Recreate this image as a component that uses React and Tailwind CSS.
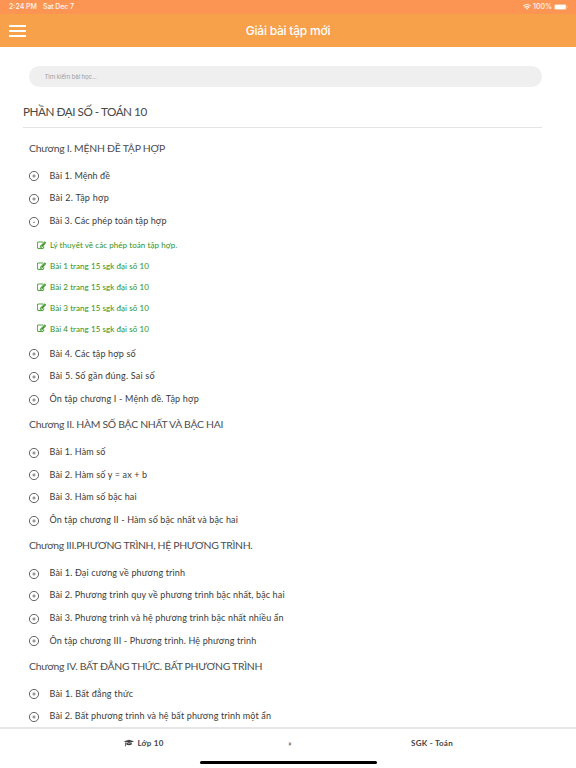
import React, { useState } from 'react';

const chapters = [
  {
    name: 'Chương I. MỆNH ĐỀ TẬP HỢP',
    tracking: 'tracking-[-0.24px]',
    lessons: [
      { name: 'Bài 1. Mệnh đề', tracking: 'tracking-[0.08px]' },
      { name: 'Bài 2. Tập hợp', tracking: 'tracking-[0.26px]' },
      {
        name: 'Bài 3. Các phép toán tập hợp',
        tracking: 'tracking-[0.1px]',
        items: [
          'Lý thuyết về các phép toán tập hợp.',
          'Bài 1 trang 15 sgk đại số 10',
          'Bài 2 trang 15 sgk đại số 10',
          'Bài 3 trang 15 sgk đại số 10',
          'Bài 4 trang 15 sgk đại số 10',
        ],
      },
      { name: 'Bài 4. Các tập hợp số' },
      { name: 'Bài 5. Số gần đúng. Sai số', tracking: 'tracking-[0.2px]' },
      { name: 'Ôn tập chương I - Mệnh đề. Tập hợp', tracking: 'tracking-[0.17px]' },
    ],
  },
  {
    name: 'Chương II. HÀM SỐ BẬC NHẤT VÀ BẬC HAI',
    tracking: 'tracking-[-0.28px]',
    lessons: [
      { name: 'Bài 1. Hàm số' },
      { name: 'Bài 2. Hàm số y = ax + b' },
      { name: 'Bài 3. Hàm số bậc hai' },
      { name: 'Ôn tập chương II - Hàm số bậc nhất và bậc hai' },
    ],
  },
  {
    name: 'Chương III.PHƯƠNG TRÌNH, HỆ PHƯƠNG TRÌNH.',
    tracking: 'tracking-[-0.32px]',
    lessons: [
      { name: 'Bài 1. Đại cương về phương trình', tracking: 'tracking-[0.15px]' },
      { name: 'Bài 2. Phương trình quy về phương trình bậc nhất, bậc hai' },
      { name: 'Bài 3. Phương trình và hệ phương trình bậc nhất nhiều ẩn' },
      { name: 'Ôn tập chương III - Phương trình. Hệ phương trình' },
    ],
  },
  {
    name: 'Chương IV. BẤT ĐẲNG THỨC. BẤT PHƯƠNG TRÌNH',
    tracking: 'tracking-[-0.28px]',
    lessons: [
      { name: 'Bài 1. Bất đẳng thức', tracking: 'tracking-[0.2px]' },
      { name: 'Bài 2. Bất phương trình và hệ bất phương trình một ẩn' },
    ],
  },
];

function EditIcon() {
  return (
    <svg viewBox="0 0 1792 1792" className="h-[9px] w-[9px] shrink-0" fill="currentColor" stroke="currentColor" strokeWidth="40">
      <path d="M888 1184l116-116-152-152-116 116v56h96v96h56zm440-720q-16-16-33 1l-350 350q-17 17-1 33t33-1l350-350q17-17 1-33zm80 594v190q0 119-84.5 203.5t-203.5 84.5h-832q-119 0-203.5-84.5t-84.5-203.5v-832q0-119 84.5-203.5t203.5-84.5h832q63 0 117 25 15 7 18 23 3 17-9 29l-49 49q-14 14-32 8-23-6-45-6h-832q-66 0-113 47t-47 113v832q0 66 47 113t113 47h832q66 0 113-47t47-113v-126q0-13 9-22l64-64q15-15 35-7t20 29zm-96-738l288 288-672 672h-288v-288zm444 132l-92 92-288-288 92-92q28-28 68-28t68 28l152 152q28 28 28 68t-28 68z" />
    </svg>
  );
}

function GraduationIcon() {
  return (
    <svg viewBox="0 0 2304 1792" className="h-2 w-[10px] shrink-0" fill="currentColor">
      <path d="M1774 836l18 316q4 69-82 128t-235 93.5-323 34.5-323-34.5-235-93.5-82-128l18-316 574 181q22 7 48 7t48-7zm530-324q0 23-22 31l-1120 352q-4 1-10 1t-10-1l-652-206q-43 34-71 111.5t-34 178.5q63 36 63 109 0 69-58 107l58 433q2 14-8 25-9 11-24 11h-192q-15 0-24-11-10-11-8-25l58-433q-58-38-58-107 0-73 65-111 11-207 98-330l-333-104q-22-8-22-31t22-31l1120-352q4-1 10-1t10 1l1120 352q22 8 22 31z" />
    </svg>
  );
}

function StatusBar() {
  return (
    <div className="flex h-[14px] items-center justify-between bg-[#fc9553] pr-2 pl-[9px] font-['Inter',sans-serif] text-[7px] font-medium text-white/90">
      <div className="flex gap-[6px]">
        <span>2:24 PM</span>
        <span className="tracking-[-0.1px]">Sat Dec 7</span>
      </div>
      <div className="flex items-center gap-[2px]">
        <svg viewBox="0 0 16 12" className="h-[6px] w-2" fill="none" stroke="currentColor" strokeWidth="2.6">
          <path d="M1 4.2a10 10 0 0 1 14 0M3.6 7.2a6.2 6.2 0 0 1 8.8 0" />
          <path d="M8 11.6 5.6 9.2a3.4 3.4 0 0 1 4.8 0z" fill="currentColor" stroke="none" />
        </svg>
        <span>100%</span>
        <svg viewBox="0 0 28 12" className="h-[6px] w-[14px]">
          <rect x="0.5" y="0.5" width="24" height="11" rx="3" fill="none" stroke="white" strokeOpacity="0.5" />
          <rect x="1.5" y="1.5" width="22" height="9" rx="2" fill="white" />
          <path d="M26 4v4c1.6-.6 1.6-3.4 0-4z" fill="white" fillOpacity="0.6" />
        </svg>
      </div>
    </div>
  );
}

function LessonRow({ lesson, open, onToggle }) {
  return (
    <>
      <button onClick={onToggle} className="flex h-[22.6px] w-full cursor-pointer items-center text-left">
        <svg viewBox="0 0 10 10" className="mt-[2px] h-[10px] w-[10px]" fill="none" stroke="#333">
          <circle cx="5" cy="5" r="4.6" strokeWidth="0.75" />
          <path d={open ? 'M4 5.3h2' : 'M3.3 5h3.4M5 3.3v3.4'} strokeWidth="0.6" />
        </svg>
        <span className={`ml-[10.5px] text-[9px] whitespace-nowrap text-[#3a3a3a] ${lesson.tracking || 'tracking-[0.14px]'}`}>
          {lesson.name}
        </span>
      </button>
      {open && lesson.items && (
        <ul className="py-[3.1px] pl-2">
          {lesson.items.map((item) => (
            <li key={item} className="flex h-[20.8px] items-center text-[#2f9118]">
              <EditIcon />
              <span className="ml-1 text-[8px] tracking-[0.07px] whitespace-nowrap">{item}</span>
            </li>
          ))}
        </ul>
      )}
    </>
  );
}

function App() {
  const [openLesson, setOpenLesson] = useState('0-2');

  return (
    <div className="flex h-screen flex-col overflow-hidden bg-white font-['Lato','Noto_Sans',sans-serif]">
      <StatusBar />
      <header className="grid h-[33px] shrink-0 grid-cols-[1fr_auto_1fr] items-center bg-[#f7a14a] px-[9px] text-white">
        <button className="flex w-[17px] cursor-pointer flex-col gap-[3px]">
          <span className="h-[2px] bg-white" />
          <span className="h-[2px] bg-white" />
          <span className="h-[2px] bg-white" />
        </button>
        <h1 className="font-['Inter',sans-serif] text-[12px] font-medium tracking-[-0.23px]">Giải bài tập mới</h1>
      </header>

      <main className="min-h-0 flex-1 overflow-hidden px-[29px] pt-[19px]">
        <input
          placeholder="Tìm kiếm bài học..."
          className="block h-[21px] w-[513px] rounded-full bg-[#efefef] px-[15.5px] font-['Roboto',sans-serif] text-[6.4px] tracking-[-0.08px] placeholder-[#a3a3a3]"
        />
        <h2 className="-ml-[6px] flex h-[41px] w-[519px] items-center border-b border-[#e4e4e4] pt-[9px] text-[11.7px] tracking-[-0.46px] whitespace-nowrap text-[#484848]">
          PHẦN ĐẠI SỐ - TOÁN 10
        </h2>
        <div className="pt-[5.7px]">
          {chapters.map((chapter, i) => (
            <section key={chapter.name}>
              <h3 className={`flex h-[30.5px] items-center text-[10.4px] whitespace-nowrap text-[#4c4c4c] ${chapter.tracking}`}>
                {chapter.name}
              </h3>
              {chapter.lessons.map((lesson, j) => (
                <LessonRow
                  key={lesson.name}
                  lesson={lesson}
                  open={openLesson === `${i}-${j}`}
                  onToggle={() => setOpenLesson(openLesson === `${i}-${j}` ? null : `${i}-${j}`)}
                />
              ))}
            </section>
          ))}
        </div>
      </main>

      <footer className="flex h-[41px] shrink-0 flex-col items-center border-t-2 border-[#e6e6e6]">
        <div className="grid h-[28px] w-full grid-cols-[288px_4px_280px] items-center text-[8px] font-bold tracking-[0.25px] text-[#444]">
          <span className="flex items-center justify-center gap-[3px]">
            <GraduationIcon />
            Lớp 10
          </span>
          <span className="text-center text-[7px] text-[#555]">»</span>
          <span className="text-center">SGK - Toán</span>
        </div>
        <div className="mt-[4px] h-[3px] w-[177px] rounded-full bg-black" />
      </footer>
    </div>
  );
}

export default App;
